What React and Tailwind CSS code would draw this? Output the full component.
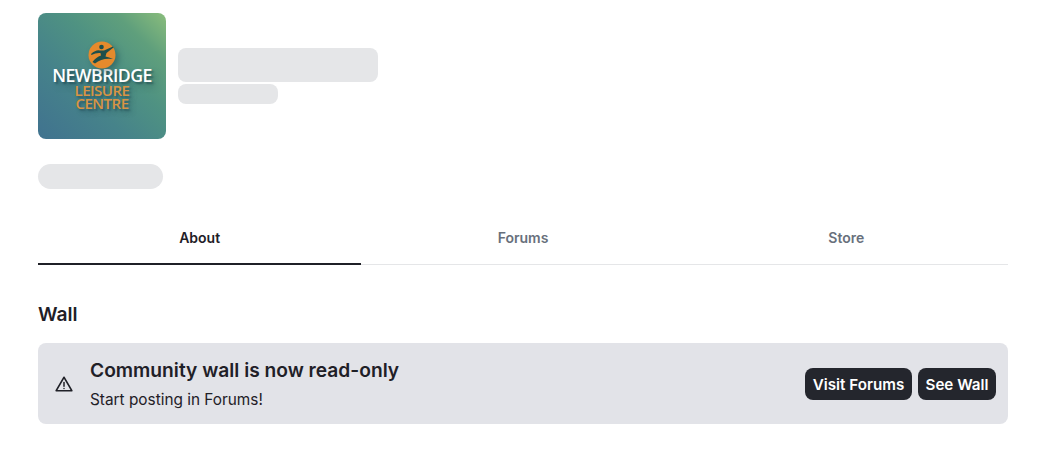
const Logo = () => (
  <div className="flex h-[126px] w-[128px] shrink-0 flex-col items-center rounded-lg bg-[linear-gradient(to_top_right,#40728f_0%,#46838a_35%,#4f9282_60%,#5f9f7c_80%,#8abd7c_100%)] pt-[28px] font-['Open_Sans',sans-serif]">
    <svg width="28" height="28" viewBox="0 0 28 28" className="shrink-0 drop-shadow-[3px_3px_3px_rgba(25,65,75,0.45)]">
      <circle cx="14" cy="14" r="13.5" fill="#e58a2c" />
      <circle cx="13.5" cy="6" r="2.3" fill="#1d4f4b" />
      <path d="M3 13 Q8 8.5 12 9.5 L16 9.5 L25 5.5 L25.5 6.5 L18.5 12 L17.5 15.5 Q21 16 25 18 Q14 16.5 7 22.5 L4.5 21 Q8 16 13 14.5 L12.5 12 Q8 11.5 3.5 14 Z" fill="#1d4f4b" />
    </svg>
    <div className="mt-[-3px] text-[17.7px] leading-[19px] font-semibold tracking-[-0.55px] text-white [text-shadow:2px_2px_2px_rgba(25,65,75,0.6),5px_5px_6px_rgba(25,65,75,0.35)]">NEWBRIDGE</div>
    <div className="mt-[-1px] text-[15px] leading-[13px] font-semibold tracking-[-0.5px] text-[#d99443] [text-shadow:2px_2px_2px_rgba(25,65,75,0.5),4px_4px_5px_rgba(25,65,75,0.3)]">LEISURE</div>
    <div className="text-[15px] leading-[13px] font-semibold tracking-[-0.5px] text-[#d99443] [text-shadow:2px_2px_2px_rgba(25,65,75,0.5),4px_4px_5px_rgba(25,65,75,0.3)]">CENTRE</div>
  </div>
)

const Tab = ({ label, active }) => (
  <div className={`flex h-[53px] flex-1 items-center justify-center text-[14px] font-semibold ${active ? 'border-b-2 border-[#1f2027] text-[#1f2027]' : 'border-b-2 border-transparent text-[#68707c]'}`}>
    {label}
  </div>
)

export default function App() {
  return (
    <div className="min-h-[454px] bg-white px-[38px] pt-[13px] font-['Inter',sans-serif] text-[#1f2027]">
      {/* Header */}
      <div className="flex items-center gap-3">
        <Logo />
        <div className="flex flex-col gap-[2px]">
          <div className="h-[34px] w-[200px] rounded-lg bg-[#e5e6e8]" />
          <div className="h-5 w-[100px] rounded-lg bg-[#e5e6e8]" />
        </div>
      </div>
      <div className="mt-[25px] h-[25px] w-[125px] rounded-full bg-[#e5e6e8]" />

      {/* Tabs */}
      <div className="mt-[23px] flex h-[53px] w-[970px] items-start border-b border-[#e5e6e8]">
        <Tab label="About" active />
        <Tab label="Forums" />
        <Tab label="Store" />
      </div>

      <h2 className="mt-[37px] text-[19.2px] leading-[24px] font-semibold">Wall</h2>

      {/* Notice */}
      <div className="mt-[17px] flex h-[81px] w-[970px] items-center rounded-lg bg-[#e2e3e8] pr-3 pl-[17px]">
        <svg width="18" height="18" viewBox="0 0 24 24" fill="none" stroke="currentColor" strokeWidth="2" strokeLinecap="round" strokeLinejoin="round" className="mt-[1px] shrink-0">
          <path d="M12 3 L22.5 21 H1.5 Z" />
          <path d="M12 10v5" />
          <path d="M12 18h.01" />
        </svg>
        <div className="ml-[17px] flex-1 pt-[1px]">
          <div className="mt-[-1px] text-[19.2px] leading-[26px] font-semibold">Community wall is now read-only</div>
          <div className="mt-[7px] text-[15.36px] leading-[20px]">Start posting in Forums!</div>
        </div>
        <div className="mt-[1px] flex gap-[6px]">
          <button className="h-8 w-[107px] rounded-lg bg-[#24262d] pt-[2px] text-[15.2px] font-semibold text-white">Visit Forums</button>
          <button className="h-8 w-[78px] rounded-lg bg-[#24262d] pt-[2px] text-[15.2px] font-semibold text-white">See Wall</button>
        </div>
      </div>
    </div>
  )
}
